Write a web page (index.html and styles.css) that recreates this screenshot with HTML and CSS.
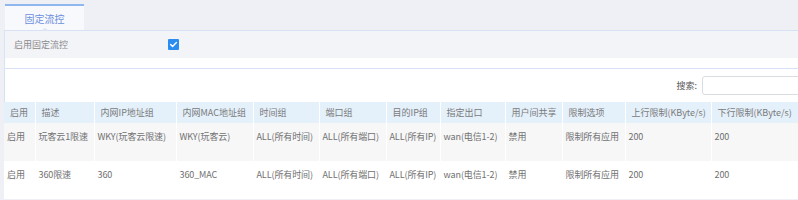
FILE: index.html
```html
<!DOCTYPE html>
<html lang="zh">
<head>
<meta charset="utf-8">
<title>固定流控</title>
<link rel="stylesheet" href="styles.css">
</head>
<body>
<div class="tabs">
  <div class="tab">固定流控</div>
</div>
<div class="panel">
  <div class="enable-row">
    <span class="enable-label">启用固定流控</span>
    <span class="checkbox"><svg viewBox="0 0 11 11" width="11" height="11"><path d="M2.6 5.6 L4.6 7.5 L8.4 3.6" fill="none" stroke="#fff" stroke-width="1.4" stroke-linecap="round" stroke-linejoin="round"/></svg></span>
  </div>
  <div class="enable-gap"></div>
</div>
<div class="panel panel-list">
  <div class="search-row">
    <label class="search-label">搜索:</label>
    <input class="search-input" type="text">
  </div>
  <table class="grid">
    <colgroup>
      <col class="c1"><col class="c2"><col class="c3"><col class="c4"><col class="c5"><col class="c6"><col class="c7"><col class="c8"><col class="c9"><col class="c10"><col class="c11"><col class="c12">
    </colgroup>
    <thead>
      <tr>
        <th>启用</th><th>描述</th><th>内网IP地址组</th><th>内网MAC地址组</th><th>时间组</th><th>端口组</th><th>目的IP组</th><th>指定出口</th><th>用户间共享</th><th>限制选项</th><th>上行限制(KByte/s)</th><th>下行限制(KByte/s)</th>
      </tr>
    </thead>
    <tbody>
      <tr class="odd">
        <td>启用</td><td>玩客云1限速</td><td>WKY(玩客云限速)</td><td>WKY(玩客云)</td><td>ALL(所有时间)</td><td>ALL(所有端口)</td><td>ALL(所有IP)</td><td>wan(电信1-2)</td><td>禁用</td><td>限制所有应用</td><td>200</td><td>200</td>
      </tr>
      <tr>
        <td>启用</td><td>360限速</td><td>360</td><td>360_MAC</td><td>ALL(所有时间)</td><td>ALL(所有端口)</td><td>ALL(所有IP)</td><td>wan(电信1-2)</td><td>禁用</td><td>限制所有应用</td><td>200</td><td>200</td>
      </tr>
    </tbody>
  </table>
</div>
</body>
</html>
```

FILE: styles.css
```css
html, body {
  margin: 0;
  padding: 0;
}
body {
  background: #eef0f5;
  font-family: "Noto Sans CJK SC", "Noto Sans", sans-serif;
  font-size: 9px;
  color: #777;
  width: 798px;
  height: 200px;
  overflow: hidden;
}
.tabs {
  display: flex;
  padding: 4px 0 0 5px;
  height: 26px;
}
.tab {
  position: relative;
  width: 79px;
  height: 24px;
  border-top: 2px solid #8fb7ee;
  background: #f8f9fc;
  color: #6b8fdc;
  font-size: 10px;
  display: flex;
  align-items: center;
  justify-content: center;
}
.tab::after {
  content: "";
  position: absolute;
  left: 36px;
  bottom: -1px;
  width: 0;
  height: 0;
  border-left: 4px solid transparent;
  border-right: 4px solid transparent;
  border-bottom: 3px solid #dce5f4;
}
.panel {
  margin-left: 4px;
  border-top: 1px solid #d7e2f4;
  border-left: 1px solid #d7e2f4;
  background: #fff;
}
.enable-row {
  height: 27px;
  background: #f3f4f8;
  display: flex;
  align-items: center;
  padding-left: 9px;
}
.enable-label {
  width: 154px;
  color: #8a8a8a;
}
.checkbox {
  width: 11px;
  height: 11px;
  background: #2b8cf0;
  border-radius: 1px;
  display: flex;
}
.enable-gap {
  height: 10px;
}
.panel-list {
  border-left: none;
  margin-left: 4px;
}
.search-row {
  height: 33px;
  display: flex;
  align-items: center;
  justify-content: flex-end;
  border-left: 1px solid #d7e2f4;
}
.search-label {
  color: #555;
  margin-right: 5px;
}
.search-input {
  width: 110px;
  height: 17px;
  margin: 0 -16px 0 0;
  padding: 0;
  border: 1px solid #d9dce3;
  border-radius: 3px;
  background: #fff;
  outline: none;
}
.grid {
  border-collapse: collapse;
  table-layout: fixed;
  width: 800px;
}
.c1 { width: 31px; }
.c2 { width: 59px; }
.c3 { width: 82px; }
.c4 { width: 77px; }
.c5 { width: 66px; }
.c6 { width: 67px; }
.c7 { width: 54px; }
.c8 { width: 65px; }
.c9 { width: 57px; }
.c10 { width: 63px; }
.c11 { width: 86px; }
.c12 { width: 93px; }
.grid th {
  height: 21px;
  padding: 0 0 0 6px;
  background: #e4f0fa;
  border-left: 1px solid #fff;
  font-weight: normal;
  text-align: left;
  color: #7a7a7a;
  white-space: nowrap;
}
.grid th:first-child {
  border-left: none;
}
.grid td {
  height: 38px;
  padding: 7px 0 0 3px;
  box-sizing: border-box;
  vertical-align: top;
  border-left: 1px solid #fff;
  white-space: nowrap;
  color: #707070;
  letter-spacing: -0.1px;
}
.grid td:first-child {
  border-left: none;
}
.grid tr.odd td {
  background: #f7f7f8;
}
```
